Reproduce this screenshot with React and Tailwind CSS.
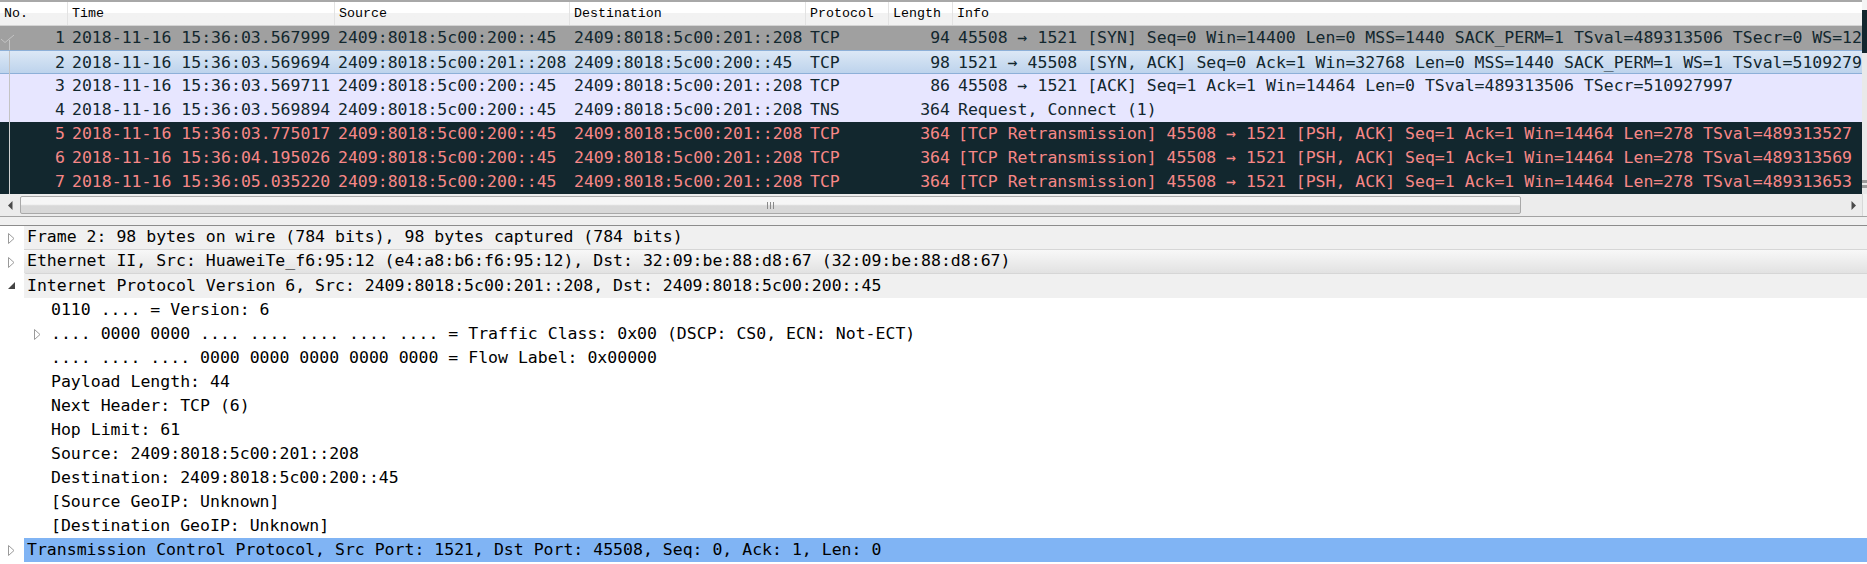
import React from "react";

// Wireshark-style packet list + packet details, Windows classic look.
const MONO = "font-['DejaVu_Sans_Mono',monospace] text-[16.5px]";

const packets = [
  {
    no: 1,
    time: "2018-11-16 15:36:03.567999",
    src: "2409:8018:5c00:200::45",
    dst: "2409:8018:5c00:201::208",
    proto: "TCP",
    len: 94,
    info: "45508 → 1521 [SYN] Seq=0 Win=14400 Len=0 MSS=1440 SACK_PERM=1 TSval=489313506 TSecr=0 WS=128",
    kind: "syn",
  },
  {
    no: 2,
    time: "2018-11-16 15:36:03.569694",
    src: "2409:8018:5c00:201::208",
    dst: "2409:8018:5c00:200::45",
    proto: "TCP",
    len: 98,
    info: "1521 → 45508 [SYN, ACK] Seq=0 Ack=1 Win=32768 Len=0 MSS=1440 SACK_PERM=1 WS=1 TSval=510927997 TSecr=489313506",
    kind: "selected",
  },
  {
    no: 3,
    time: "2018-11-16 15:36:03.569711",
    src: "2409:8018:5c00:200::45",
    dst: "2409:8018:5c00:201::208",
    proto: "TCP",
    len: 86,
    info: "45508 → 1521 [ACK] Seq=1 Ack=1 Win=14464 Len=0 TSval=489313506 TSecr=510927997",
    kind: "tcp",
  },
  {
    no: 4,
    time: "2018-11-16 15:36:03.569894",
    src: "2409:8018:5c00:200::45",
    dst: "2409:8018:5c00:201::208",
    proto: "TNS",
    len: 364,
    info: "Request, Connect (1)",
    kind: "tcp",
  },
  {
    no: 5,
    time: "2018-11-16 15:36:03.775017",
    src: "2409:8018:5c00:200::45",
    dst: "2409:8018:5c00:201::208",
    proto: "TCP",
    len: 364,
    info: "[TCP Retransmission] 45508 → 1521 [PSH, ACK] Seq=1 Ack=1 Win=14464 Len=278 TSval=489313527 TSecr=510927997",
    kind: "bad",
  },
  {
    no: 6,
    time: "2018-11-16 15:36:04.195026",
    src: "2409:8018:5c00:200::45",
    dst: "2409:8018:5c00:201::208",
    proto: "TCP",
    len: 364,
    info: "[TCP Retransmission] 45508 → 1521 [PSH, ACK] Seq=1 Ack=1 Win=14464 Len=278 TSval=489313569 TSecr=510927997",
    kind: "bad",
  },
  {
    no: 7,
    time: "2018-11-16 15:36:05.035220",
    src: "2409:8018:5c00:200::45",
    dst: "2409:8018:5c00:201::208",
    proto: "TCP",
    len: 364,
    info: "[TCP Retransmission] 45508 → 1521 [PSH, ACK] Seq=1 Ack=1 Win=14464 Len=278 TSval=489313653 TSecr=510927997",
    kind: "bad",
  },
];

const rowStyles = {
  syn: "bg-[#a0a0a0] text-[#12272e]",
  selected:
    "bg-linear-to-b from-[#dce8f6] to-[#bdd3ec] text-[#12272e] border-y border-[#8db0d8]",
  tcp: "bg-[#e7e6ff] text-[#12272e]",
  bad: "bg-[#12272e] text-[#f78787]",
};

const COLS = "grid grid-cols-[67px_267px_235px_236px_83px_64px_1fr]";

function Related({ first, dark }) {
  const c = dark ? "#d0d0d0" : "#c4c4c4";
  return (
    <svg width="20" height="24" className="shrink-0">
      {first ? (
        <>
          <path d="M1 13 L5 16.5 L14 9" stroke={c} fill="none" strokeWidth="1" />
          <path d="M9.5 14 V24" stroke={c} strokeWidth="1" />
        </>
      ) : (
        <path d="M9.5 0 V24" stroke={c} strokeWidth="1" />
      )}
    </svg>
  );
}

function PacketRow({ p }) {
  return (
    <div className={`${COLS} h-[24px] items-center whitespace-nowrap ${rowStyles[p.kind]}`}>
      <div className="flex items-center justify-between pr-[2px]">
        <Related first={p.no === 1} dark={p.kind === "bad"} />
        <span>{p.no}</span>
      </div>
      <div className="pl-[5px]">{p.time}</div>
      <div className="pl-[4px]">{p.src}</div>
      <div className="pl-[5px]">{p.dst}</div>
      <div className="pl-[5px]">{p.proto}</div>
      <div className="pr-[2px] text-right">{p.len}</div>
      <div className="pl-[6px] overflow-hidden">{p.info}</div>
    </div>
  );
}

function Header() {
  const cols = ["No.", "Time", "Source", "Destination", "Protocol", "Length", "Info"];
  return (
    <div
      className={`${COLS} h-[26px] border-t-2 border-b border-t-[#a8a8a8] border-b-[#d4d4d4] bg-linear-to-b from-white from-50% to-[#f2f2f2] to-50% font-['Liberation_Mono',monospace] text-[13.3px] text-black`}
    >
      {cols.map((c, i) => (
        <div
          key={c}
          className={`flex items-center pl-[4px] ${i > 0 ? "border-l border-[#e3e3e3]" : "pl-[3px]"}`}
        >
          {c}
        </div>
      ))}
    </div>
  );
}

function Collapsed() {
  return (
    <svg width="7" height="11">
      <path d="M0.5 0.5 L6 5.5 L0.5 10.5 Z" fill="white" stroke="#9a9a9a" strokeWidth="1" />
    </svg>
  );
}

function Expanded() {
  return (
    <svg width="8" height="8">
      <path d="M7 0 V7 H0 Z" fill="#444" />
    </svg>
  );
}

function TopItem({ icon, bg, children }) {
  return (
    <div className="flex h-[24px]">
      <div className="w-[24px] flex items-center pl-[8px]">{icon}</div>
      <div className={`flex-1 flex items-center pl-[3px] whitespace-nowrap ${bg}`}>{children}</div>
    </div>
  );
}

function ChildItem({ icon, children }) {
  return (
    <div className="flex h-[24px] items-center whitespace-nowrap">
      <div className="w-[24px]" />
      <div className="w-[24px] flex items-center pl-[10px]">{icon}</div>
      <div className="pl-[3px]">{children}</div>
    </div>
  );
}

function HScrollbar() {
  return (
    <div className="flex h-[23px] bg-[#ececec] border-b border-[#a3a3a3]">
      <div className="w-[20px] flex items-center justify-center">
        <svg width="5" height="9">
          <path d="M4.5 0 V9 L0 4.5 Z" fill="#4a4a4a" />
        </svg>
      </div>
      <div className="flex-1 flex py-[2px]">
        <div className="w-[1501px] rounded-[2px] border border-[#a9a9a9] bg-linear-to-b from-[#f6f6f6] from-45% to-[#d8d8d8] to-55% flex items-center justify-center gap-[2px]">
          <div className="w-px h-[7px] bg-[#8a8a8a]" />
          <div className="w-px h-[7px] bg-[#8a8a8a]" />
          <div className="w-px h-[7px] bg-[#8a8a8a]" />
        </div>
      </div>
      <div className="w-[17px] flex items-center justify-center">
        <svg width="5" height="9">
          <path d="M0.5 0 V9 L5 4.5 Z" fill="#4a4a4a" />
        </svg>
      </div>
      <div className="w-[5px] border-l border-[#d8d8d8] bg-[#f2f2f2]" />
    </div>
  );
}

export default function App() {
  return (
    <div className={`w-[1867px] h-[564px] overflow-hidden bg-white text-black ${MONO}`}>
      <div className="flex">
        <div className="flex-1 min-w-0">
          <Header />
          {packets.map((p) => (
            <PacketRow key={p.no} p={p} />
          ))}
        </div>
        <div className="w-[5px] flex flex-col bg-[#e9e9e9]">
          <div className="h-[10px] bg-[#f4f4f4]" />
          <div className="h-[43px] bg-[#12272e]" />
          <div className="h-[127px]" />
          <div className="h-[3px] bg-[#9a9a9a]" />
          <div className="h-[2px]" />
          <div className="h-[3px] bg-[#9a9a9a]" />
        </div>
      </div>

      <HScrollbar />
      <div className="h-[9px] bg-[#f0f0f0] border-b border-[#8c8c8c]" />

      <div className="flex flex-col">
        <TopItem icon={<Collapsed />} bg="bg-[#f0f0f0] border-b border-[#d6d6d6]">
          Frame 2: 98 bytes on wire (784 bits), 98 bytes captured (784 bits)
        </TopItem>
        <TopItem
          icon={<Collapsed />}
          bg="bg-linear-to-b from-[#f8f8f8] to-[#e2e2e2] border-b border-[#d6d6d6] rounded-l-[2px]"
        >
          Ethernet II, Src: HuaweiTe_f6:95:12 (e4:a8:b6:f6:95:12), Dst: 32:09:be:88:d8:67 (32:09:be:88:d8:67)
        </TopItem>
        <TopItem icon={<Expanded />} bg="bg-[#f0f0f0]">
          Internet Protocol Version 6, Src: 2409:8018:5c00:201::208, Dst: 2409:8018:5c00:200::45
        </TopItem>
        <ChildItem>0110 .... = Version: 6</ChildItem>
        <ChildItem icon={<Collapsed />}>
          .... 0000 0000 .... .... .... .... .... = Traffic Class: 0x00 (DSCP: CS0, ECN: Not-ECT)
        </ChildItem>
        <ChildItem>.... .... .... 0000 0000 0000 0000 0000 = Flow Label: 0x00000</ChildItem>
        <ChildItem>Payload Length: 44</ChildItem>
        <ChildItem>Next Header: TCP (6)</ChildItem>
        <ChildItem>Hop Limit: 61</ChildItem>
        <ChildItem>Source: 2409:8018:5c00:201::208</ChildItem>
        <ChildItem>Destination: 2409:8018:5c00:200::45</ChildItem>
        <ChildItem>[Source GeoIP: Unknown]</ChildItem>
        <ChildItem>[Destination GeoIP: Unknown]</ChildItem>
        <TopItem icon={<Collapsed />} bg="bg-[#80b4f4]">
          Transmission Control Protocol, Src Port: 1521, Dst Port: 45508, Seq: 0, Ack: 1, Len: 0
        </TopItem>
      </div>
    </div>
  );
}
